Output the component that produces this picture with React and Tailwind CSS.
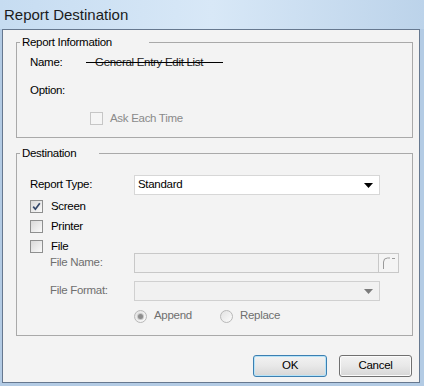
const ui = { fontFamily: "'Liberation Sans', Arial, sans-serif" };

function Box({ checked, disabled }) {
  return (
    <span
      className={
        disabled
          ? "flex h-[13px] w-[13px] shrink-0 items-center justify-center border border-[#c6c6c6] bg-[#f5f5f5]"
          : "flex h-[13px] w-[13px] shrink-0 items-center justify-center border border-[#8e8f8f] bg-gradient-to-br from-[#d9d9d9] to-[#fafafa]"
      }
    >
      {checked && (
        <svg width="9" height="9" viewBox="0 0 9 9">
          <path d="M1.2 4.6 L3.4 7.2 L7.8 1.2" fill="none" stroke="#33476a" strokeWidth="1.7" />
        </svg>
      )}
    </span>
  );
}

function Radio({ on }) {
  return (
    <span className="flex h-[13px] w-[13px] shrink-0 items-center justify-center rounded-full border border-[#b8b8b8] bg-gradient-to-br from-[#e2e2e2] to-[#fbfbfb]">
      {on && <span className="h-[5px] w-[5px] rounded-full bg-[#8d8d8d] shadow-[0_0_0_1px_#c9c9c9]" />}
    </span>
  );
}

function Arrow({ color }) {
  return (
    <svg width="9" height="5" viewBox="0 0 9 5">
      <polygon points="0,0 9,0 4.5,5" fill={color} />
    </svg>
  );
}

export default function App() {
  return (
    <div className="flex h-[386px] w-[424px] flex-col overflow-hidden bg-[#b3cbe4]" style={ui}>
      {/* title bar */}
      <div className="flex h-[29px] shrink-0 items-center bg-gradient-to-r from-[#c6dcf1] via-[#d8e8f7] to-[#bcd3ea] pl-[4px]">
        <span className="text-[15px] leading-none text-[#1b1b1b]">Report Destination</span>
      </div>

      {/* client area */}
      <div className="ml-[2px] mr-[4px] h-[354px] border border-[#66788f] bg-[#f3f3f3] text-[11.5px] leading-none tracking-[-0.3px] text-black">
        <div className="ml-[13px] mt-[5px] w-[397px]">
          <fieldset className="border border-[#a9a9a9] pb-[12px] pl-[13px]">
            <legend className="-ml-[10px] h-[14px] w-[129px] pl-[2px] leading-[14px]">Report Information</legend>
            <div className="mt-[5px] flex h-[18px] items-center">
              <span className="w-[56px]">Name:</span>
              <span className="relative pl-[9px] pr-[20px] text-[#1a1a1a]">
                General Entry Edit List
                <span className="absolute left-0 right-0 top-[5px] h-px bg-black" />
              </span>
            </div>
            <div className="mt-[10px] flex h-[18px] items-center">Option:</div>
            <div className="ml-[60px] mt-[12px] flex h-[13px] items-center gap-[7px] text-[#8a8a8a]">
              <Box disabled />
              <span>Ask Each Time</span>
            </div>
          </fieldset>

          <fieldset className="mt-[8px] border border-[#a9a9a9] pb-[12px] pl-[13px]">
            <legend className="-ml-[10px] h-[14px] w-[79px] pl-[2px] leading-[14px]">Destination</legend>
            <div className="mt-[15px] flex h-[20px] items-center">
              <span className="w-[104px]">Report Type:</span>
              <div className="flex h-[20px] w-[246px] items-center justify-between border border-[#d7d7d7] bg-white pl-[3px] pr-[6px]">
                <span>Standard</span>
                <Arrow color="#000" />
              </div>
            </div>
            <div className="mt-[5px] flex h-[13px] items-center gap-[8px]">
              <Box checked />
              <span>Screen</span>
            </div>
            <div className="mt-[7px] flex h-[13px] items-center gap-[8px]">
              <Box />
              <span>Printer</span>
            </div>
            <div className="mt-[7px] flex h-[13px] items-center gap-[8px]">
              <Box />
              <span>File</span>
            </div>
            <div className="flex h-[20px] items-center text-[#6f6f6f]">
              <span className="w-[104px] pl-[20px]">File Name:</span>
              <div className="h-[20px] w-[245px] border border-[#c8c8c8] bg-[#f1f1f1]" />
              <div className="flex h-[20px] w-[20px] items-center justify-center border border-l-0 border-[#c8c8c8] bg-[#f4f4f4]">
                <svg width="14" height="14" viewBox="0 0 14 14">
                  <path d="M1.5 13 V6 Q1.5 2 5.5 2 H8" fill="none" stroke="#9a9a9a" strokeWidth="1" />
                  <path d="M10 2.5 H13" stroke="#9a9a9a" strokeWidth="1" />
                </svg>
              </div>
            </div>
            <div className="mt-[8px] flex h-[20px] items-center text-[#6f6f6f]">
              <span className="w-[104px] pl-[20px]">File Format:</span>
              <div className="flex h-[20px] w-[246px] items-center justify-end border border-[#d0d0d0] bg-[#f1f1f1] pr-[6px]">
                <Arrow color="#7b7b7b" />
              </div>
            </div>
            <div className="mt-[8px] flex h-[14px] items-center text-[#6f6f6f]">
              <span className="ml-[104px] flex w-[86px] items-center gap-[7px]">
                <Radio on />
                <span>Append</span>
              </span>
              <span className="flex items-center gap-[7px]">
                <Radio />
                <span>Replace</span>
              </span>
            </div>
          </fieldset>

          <div className="mt-[19px] flex justify-end gap-[12px] pr-[1px]">
            <button className="h-[22px] w-[74px] rounded-[3px] border border-[#3c7fb1] bg-gradient-to-b from-[#f2f2f2] via-[#e8e8e8] to-[#d6d6d6] shadow-[inset_0_0_0_1px_#b6e3f8]">
              OK
            </button>
            <button className="h-[22px] w-[73px] rounded-[3px] border border-[#707070] bg-gradient-to-b from-[#f2f2f2] via-[#e8e8e8] to-[#d6d6d6] shadow-[inset_0_0_0_1px_#fbfbfb]">
              Cancel
            </button>
          </div>
        </div>
      </div>
    </div>
  );
}
